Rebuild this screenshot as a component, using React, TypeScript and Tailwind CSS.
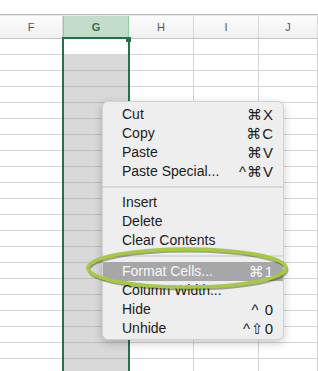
import React from 'react';

const cols = [
  { key: 'F', w: 'w-[63px]' },
  { key: 'G', w: 'w-[66px]' },
  { key: 'H', w: 'w-[65px]' },
  { key: 'I', w: 'w-[65px]' },
  { key: 'J', w: 'flex-1' },
];

const rows = Array.from({ length: 21 }, (_, i) => i);

type Item = { label: string; keys?: string; active?: boolean } | 'sep';

const menu: Item[] = [
  { label: 'Cut', keys: '⌘X' },
  { label: 'Copy', keys: '⌘C' },
  { label: 'Paste', keys: '⌘V' },
  { label: 'Paste Special...', keys: '^⌘V' },
  'sep',
  { label: 'Insert' },
  { label: 'Delete' },
  { label: 'Clear Contents' },
  'sep',
  { label: 'Format Cells...', keys: '⌘1', active: true },
  { label: 'Column Width...' },
  { label: 'Hide', keys: '^ 0' },
  { label: 'Unhide', keys: '^⇧0' },
];

const App = () => {
  return (
    <div className="relative w-[318px] h-[371px] overflow-hidden bg-white font-['Liberation_Sans','DejaVu_Sans',sans-serif]">
      <div className="h-[14px]" />
      <div className="h-[2px] border-t border-[#b9b9b9] bg-[#e9e9e9]" />

      {/* column headers */}
      <div className="flex h-[23px] border-b border-[#c4c4c4] bg-gradient-to-b from-[#fcfcfc] to-[#f0f0f0]">
        {cols.map((c) =>
          c.key === 'G' ? (
            <div key={c.key} className={`${c.w} flex items-center justify-center bg-[#c1ddc9] border-x border-[#8ccf9c] text-[11px] font-bold text-[#357049]`}>
              {c.key}
            </div>
          ) : (
            <div key={c.key} className={`${c.w} flex items-center justify-center border-r border-[#d8d8d8] text-[11px] text-[#555]`}>
              {c.key}
            </div>
          )
        )}
      </div>

      {/* cells */}
      {rows.map((r) => (
        <div key={r} className="flex h-[16px]">
          {cols.map((c) =>
            c.key === 'G' && r > 0 ? (
              <div key={c.key} className={`${c.w} bg-[#d9d9d9] border-b border-r border-[#bdbdbd]`} />
            ) : (
              <div key={c.key} className={`${c.w} border-b border-r border-[#d5d5d5]`} />
            )
          )}
        </div>
      ))}

      {/* selected column */}
      <div className="absolute left-[62px] top-[37px] bottom-0 w-[68px] border-2 border-b-0 border-[#24704a]" />
      <div className="absolute left-[126px] top-[37px] w-[5px] h-[5px] bg-[#24704a]" />

      {/* context menu */}
      <div className="absolute left-[102px] top-[101px] w-[182px] h-[239px] py-[3px] rounded-[6px] bg-[#eeeeee] border border-[#d2d2d2] shadow-[0_3px_10px_rgba(0,0,0,0.22)] text-[14px] text-[#1c1c1c]">
        {menu.map((it, i) =>
          it === 'sep' ? (
            <div key={i} className="h-[12px] flex items-center">
              <div className="h-[2px] w-full bg-[#d9d9d9]" />
            </div>
          ) : (
            <div
              key={i}
              className={`h-[19px] flex items-center justify-between pl-[19px] pr-[9px] leading-[19px] ${
                it.active ? 'bg-[#a7a7a9] text-[#f7f7f7]' : ''
              }`}
            >
              <span>{it.label}</span>
              {it.keys && <span className="text-[15px] tracking-[1px]">{it.keys}</span>}
            </div>
          )
        )}
      </div>

      {/* highlight ring */}
      <svg className="absolute left-[82px] top-[243px]" width="210" height="52" viewBox="0 0 210 52">
        <ellipse cx="106" cy="27" rx="99" ry="19" fill="none" stroke="rgba(40,40,40,0.4)" strokeWidth="3" />
        <ellipse cx="105" cy="25" rx="99" ry="19" fill="none" stroke="#a6cb3d" strokeWidth="3.5" />
      </svg>
    </div>
  );
};

export default App;
